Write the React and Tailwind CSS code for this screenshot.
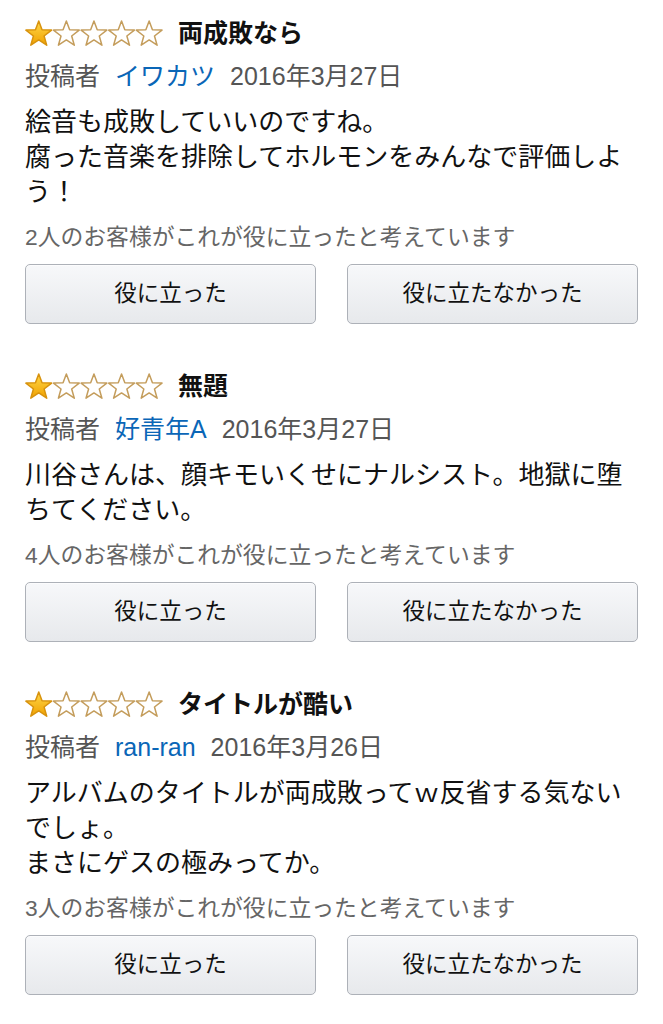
import React from "react";

const STAR = "13.75,0.9 17.04,9.77 26.6,10.1 19.08,16.03 21.7,25.2 13.75,19.9 5.8,25.2 8.42,16.03 0.9,10.1 10.46,9.77";

function Stars({ id }) {
  return (
    <svg width="139" height="27" viewBox="0 0 139 27" className="shrink-0">
      <defs>
        <linearGradient id={`g${id}`} x1="0" y1="0" x2="0" y2="1">
          <stop offset="0" stopColor="#ffd84a" />
          <stop offset="1" stopColor="#f0a100" />
        </linearGradient>
      </defs>
      {[0, 1, 2, 3, 4].map((i) => (
        <g key={i} transform={`translate(${i * 27.6},0)`}>
          <polygon
            points={STAR}
            fill={i === 0 ? `url(#g${id})` : "#ffffff"}
            stroke={i === 0 ? "#d8930e" : "#c49d5c"}
            strokeWidth="1.5"
            strokeLinejoin="round"
          />
        </g>
      ))}
    </svg>
  );
}

function Review({ id, title, author, date, body, count }) {
  return (
    <div className="flex flex-col mb-[45px]">
      <div className="flex items-center h-[34px]">
        <Stars id={id} />
        <span className="ml-[14px] text-[25px] font-bold text-[#111] leading-[34px]">{title}</span>
      </div>
      <div className="mt-[9px] h-[34px] leading-[34px] text-[25px] text-[#555] whitespace-nowrap">
        <span>投稿者</span>
        <span className="ml-[15px] text-[#0a66b7]">{author}</span>
        <span className="ml-[15px]">{date}</span>
      </div>
      <div className="mt-[12px] text-[26px] leading-[35px] text-[#111]">
        {body.map((l, i) => (
          <div key={i}>{l}</div>
        ))}
      </div>
      <div className="mt-[12px] h-[30px] leading-[30px] text-[22.8px] text-[#666] whitespace-nowrap">
        {count}人のお客様がこれが役に立ったと考えています
      </div>
      <div className="mt-[12px] grid grid-cols-2 gap-[31px]">
        <button className="h-[60px] rounded-[5px] border border-[#adb1b8] bg-gradient-to-b from-[#f7f8fa] to-[#e7e9ec] text-[22.5px] text-[#111] shadow-[0_1px_0_rgba(255,255,255,0.6)_inset]">
          役に立った
        </button>
        <button className="h-[60px] rounded-[5px] border border-[#adb1b8] bg-gradient-to-b from-[#f7f8fa] to-[#e7e9ec] text-[22.5px] text-[#111] shadow-[0_1px_0_rgba(255,255,255,0.6)_inset]">
          役に立たなかった
        </button>
      </div>
    </div>
  );
}

export default function App() {
  return (
    <div
      className="w-[663px] min-h-[1024px] bg-white px-[25px] pt-[16px]"
      style={{ fontFamily: '"Liberation Sans", "Noto Sans CJK JP", sans-serif' }}
    >
      <Review
        id="a"
        title="両成敗なら"
        author="イワカツ"
        date="2016年3月27日"
        body={["絵音も成敗していいのですね。", "腐った音楽を排除してホルモンをみんなで評価しよう！"]}
        count={2}
      />
      <Review
        id="b"
        title="無題"
        author="好青年A"
        date="2016年3月27日"
        body={["川谷さんは、顔キモいくせにナルシスト。地獄に堕ちてください。"]}
        count={4}
      />
      <Review
        id="c"
        title="タイトルが酷い"
        author="ran-ran"
        date="2016年3月26日"
        body={["アルバムのタイトルが両成敗ってｗ反省する気ないでしょ。", "まさにゲスの極みってか。"]}
        count={3}
      />
    </div>
  );
}
